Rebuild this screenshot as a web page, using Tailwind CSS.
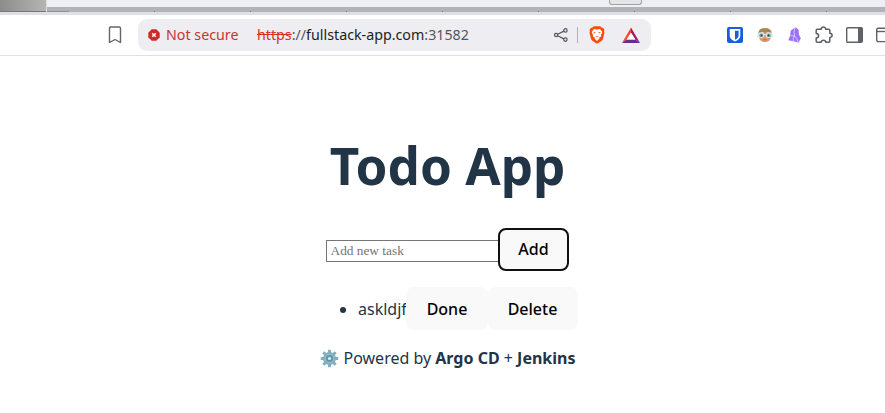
<!DOCTYPE html>
<html lang="en">
<head>
<meta charset="utf-8">
<title>Todo App</title>
<script src="https://cdn.jsdelivr.net/npm/@tailwindcss/browser@4"></script>
</head>
<body class="w-[885px] h-[413px] overflow-hidden bg-white font-['Noto_Sans',sans-serif] text-[#213547]">
<header>
  <!-- tab strip edge -->
  <div class="flex h-3">
    <div class="w-[46px] shrink-0 bg-linear-to-r from-[#8c8c8a] to-[#b5b5b3] border-b border-[#777773]"></div>
    <div class="w-px bg-[#dcdcda]"></div>
    <div class="grow">
      <div class="h-[7px] bg-[#eeeff1] pl-[562px]">
        <div class="w-[33px] h-[5px] rounded-b-[3px] border border-t-0 border-[#a2a2a5] bg-[#e5e5e7]"></div>
      </div>
      <div class="h-[5px] bg-[#b0b3b8] flex items-end">
        <div class="w-[22px] h-px bg-[#8b929b]"></div>
        <div class="w-[85px]"></div>
        <div class="grow h-px bg-[repeating-linear-gradient(90deg,#777a80_0_1px,transparent_1px_96px)]"></div>
      </div>
    </div>
  </div>
  <div class="h-[3px] bg-[#dfdfe5]"></div>
  <!-- address bar -->
  <div class="flex h-[41px] items-center border-b border-[#dfe0e3] w-[900px]">
    <svg class="ml-[108px] shrink-0" width="14" height="18" viewBox="0 0 14 18" fill="none" stroke="#62666c" stroke-width="1.4" stroke-linejoin="round"><path d="M1.5 2.3Q1.5 1 2.8 1H11.2Q12.5 1 12.5 2.3V16.5L7 13.5 1.5 16.5Z"/></svg>
    <div class="ml-4 flex h-8 w-[513px] shrink-0 items-center rounded-[9px] bg-[#ededf2] pl-2.5 text-[14.26px] leading-5">
      <svg width="12" height="12" viewBox="0 0 12 12"><path fill="#c92e26" d="M3.7.3h4.6l3.4 3.4v4.6l-3.4 3.4H3.7L.3 8.3V3.7Z"/><path d="M4.2 4.2l3.6 3.6M7.8 4.2L4.2 7.8" stroke="#fff" stroke-width="1.4"/></svg>
      <span class="ml-1.5 w-[91px] whitespace-nowrap text-[#c9352d]">Not secure</span>
      <span class="w-[297px] whitespace-nowrap text-[#55565b]"><span class="line-through text-[#d93025]">https</span>://<span class="text-[#1c1d20]">fullstack-app.com</span>:31582</span>
      <svg width="14" height="14" viewBox="0 0 14 14" fill="none" stroke="#55585e" stroke-width="1.2"><circle cx="2.1" cy="7" r="1.6"/><circle cx="11.4" cy="2.4" r="1.7"/><circle cx="11.4" cy="11.6" r="1.7"/><path d="M3.6 6.3L9.9 3.1M3.6 7.7L9.9 10.9"/></svg>
      <div class="ml-[9px] h-4 w-px bg-[#aeb0b7]"></div>
      <svg class="ml-[11px]" width="16" height="18" viewBox="0 0 17 19"><path fill="#fb4b0b" d="M5 .3h7l1.6 1.5 1.2-.1L16.5 4l-.5 1.7.5 1.3-1.8 7.2-1.5 1.8-4.7 2.8L3.8 16l-1.5-1.8L.5 7 1 5.7.5 4l1.7-2.3 1.2.1Z"/><path fill="#fff" d="M5.3 3l3.2.6 3.2-.6 2.5 3.2-1.5 3.2.3 1.5-2.2 1.4.1 1.3-2.4 2.2-2.4-2.2.1-1.3L4 10.9l.3-1.5-1.5-3.2Z"/><path fill="#fb4b0b" d="M4.2 6.3l2.8.4-.6 1.2ZM12.8 6.3l-2.8.4.6 1.2ZM6.7 10.2l1.8.8 1.8-.8-.9 1.5H7.6Z"/></svg>
      <svg class="ml-[17px]" width="18" height="17" viewBox="0 0 18 17"><path fill="#ff4724" d="M9 .5V5.7L4.7 12.6 0 16Z"/><path fill="#9e1f63" d="M9 .5L18 16l-4.7-3.4L9 5.7Z"/><path fill="#662d91" d="M0 16l4.7-3.4h8.6L18 16Z"/><path fill="#fff" d="M9 5.7l4.3 6.9H4.7Z"/></svg>
    </div>
    <svg class="ml-[76px] shrink-0" width="16" height="16" viewBox="0 0 16 16"><rect width="16" height="16" rx="2" fill="#175ddc"/><path d="M2.7 2.1h10.6v6.3c0 3-2.7 4.9-5.3 6.1-2.6-1.2-5.3-3.1-5.3-6.1Z" fill="#fff"/><path d="M8 3.7h3.6v4.7c0 1.8-1.6 3.2-3.6 4.3Z" fill="#175ddc"/></svg>
    <svg class="ml-[14px] shrink-0" width="16" height="16" viewBox="0 0 16 16"><path fill="#dc9a77" d="M1.8 6h12.4v4q-1 5-6.2 5T1.8 10Z"/><path fill="#a98657" d="M1.2 6.5Q1.6 1 8 1t6.8 5.5L11 5.3 8.6 6 5 5.3Z"/><rect x=".3" y="5.6" width="6.9" height="5.4" rx="2.6" fill="#dce5df"/><rect x="8.8" y="5.6" width="6.9" height="5.4" rx="2.6" fill="#dce5df"/><path fill="#dce5df" d="M6 7h4v1H6Z"/><circle cx="4.2" cy="8.4" r="1.9" fill="#6cabb8"/><circle cx="11.8" cy="8.4" r="1.9" fill="#6cabb8"/><circle cx="4.5" cy="8.4" r=".9" fill="#283c43"/><circle cx="11.5" cy="8.4" r=".9" fill="#283c43"/><path stroke="#b5654f" stroke-width=".9" d="M6 12.8h4"/></svg>
    <svg class="ml-[15px] shrink-0" width="13" height="16" viewBox="0 0 13 16"><path fill="#9b70fa" d="M7.5.2L10.6 2.7 10.9 7.5 12.8 11.2 10.5 15.8 6.5 14.6.3 13.2 2 9 2.8 3.6Z"/><path fill="none" stroke="#eee6ff" stroke-width=".7" d="M6.9.6L6 5.2l.6 3.9L2.2 8.6M6.6 9.1l-1.4 2 .4 3.7M6.6 9.1l2.3 2.5 1 4"/></svg>
    <svg class="ml-[14px] shrink-0" width="18" height="18" viewBox="0 0 18 18" fill="none" stroke="#5c6066" stroke-width="1.5" stroke-linejoin="round"><path d="M2.2 3.2H6.2C5.9.3 10.9.3 10.7 3.2h3.1q1 0 1 1V7.2c3.1.2 3.1 4.1 0 4.2v3.7q0 1.2-1 1.2h-3c-.2-2.7-4.5-2.7-4.6 0H2.2q-1 0-1-1v-3.4c3.2-.1 3.2-4.2 0-4.4V4.2q0-1 1-1Z"/></svg>
    <svg class="ml-[13px] shrink-0" width="17" height="16" viewBox="0 0 17 16"><rect x=".7" y=".7" width="15.6" height="14.6" rx="1" fill="#fff" stroke="#5f6368" stroke-width="1.4"/><path fill="#5f6368" d="M12 1h4v14h-4Z"/></svg>
    <svg class="ml-[13px] shrink-0" width="18" height="16" viewBox="0 0 18 16" fill="none" stroke="#5f6368" stroke-width="1.4"><rect x=".7" y="1.2" width="16" height="13.4" rx="1.5"/><path d="M1 4.5h16"/></svg>
  </div>
</header>
<main class="ml-[294px] flex w-[307px] flex-col items-center">
  <h1 class="mt-[81px] whitespace-nowrap text-[51.2px] leading-[56px] font-bold">Todo App</h1>
  <div class="mt-[35px] flex items-center">
    <input class="mt-0.5 h-[22px] w-[172px] border border-r-0 border-[#767676] bg-white px-[3.5px] font-['Liberation_Serif',serif] text-[13.333px] placeholder:text-[#757575] rounded-l-[1px]" placeholder="Add new task">
    <button class="h-[43px] w-[71px] rounded-[8px] border-2 border-[#101010] bg-[#f9f9f9] pb-0.5 text-base font-medium text-black">Add</button>
  </div>
  <ul class="mt-4 ml-[64px] w-[220px] list-disc self-start">
    <li><div class="flex h-[43px] items-center"><span class="w-12">askldjf</span><button class="h-[43px] w-[82px] shrink-0 rounded-[8px] bg-[#f9f9f9] font-medium text-black">Done</button><button class="h-[43px] w-[90px] shrink-0 rounded-[8px] bg-[#f9f9f9] pr-px font-medium text-black">Delete</button></div></li>
  </ul>
  <p class="mt-4 flex items-center whitespace-nowrap text-base">
    <svg class="mr-[5px]" width="19" height="19" viewBox="0 0 20 20"><g stroke="#82aebf" stroke-width="3.1"><path d="M10 .8v18.4M.8 10h18.4M3.5 3.5l13 13M16.5 3.5l-13 13"/></g><circle cx="10" cy="10" r="6.8" fill="#82aebf"/><circle cx="10" cy="10" r="4.3" fill="#6497ab" stroke="#9bc4d1" stroke-width="1"/><circle cx="10" cy="10" r="1.6" fill="#e6f2f5"/></svg>
    <span>Powered by <b>Argo CD</b> + <b>Jenkins</b></span>
  </p>
</main>
</body>
</html>
